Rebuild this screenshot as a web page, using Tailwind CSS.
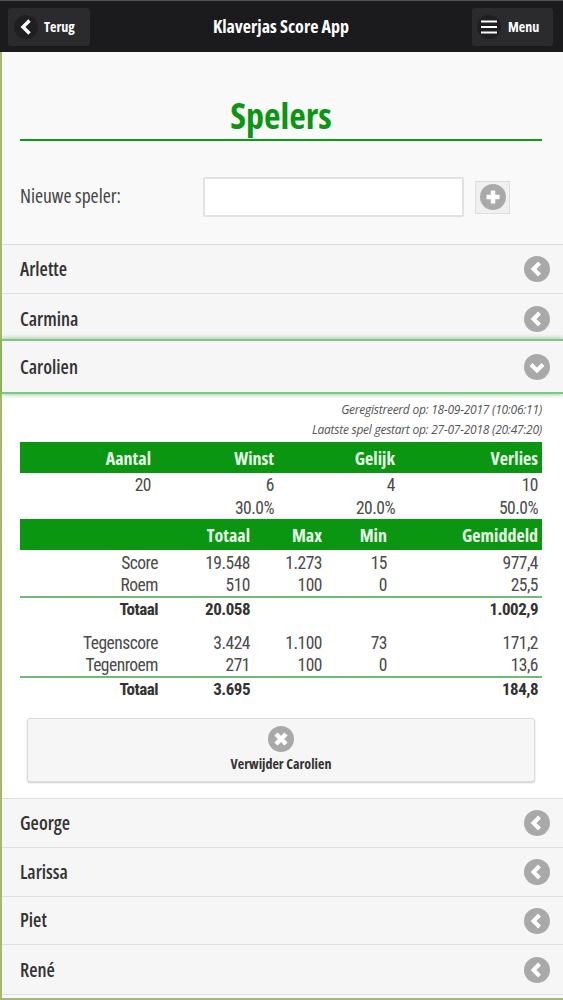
<!DOCTYPE html>
<html lang="nl">
<head>
    <meta charset="UTF-8">
    <meta name="viewport" content="width=device-width, initial-scale=1.0">
    <title>Klaverjas Score App</title>
    <script src="https://cdn.jsdelivr.net/npm/@tailwindcss/browser@4"></script>
</head>
<body class="bg-[#f9f9f9] font-['Open_Sans',sans-serif] [font-stretch:75%] text-[#333]">
    <div class="w-[563px] h-[1000px] overflow-hidden flex flex-col">
        <header class="h-[52px] shrink-0 bg-[#1b1b1d] border-t border-[#555] flex items-center justify-between pl-2 pr-[10px]">
            <a class="w-[82px] h-[38px] bg-[#2b2b2d] rounded-[3px] flex items-center pl-[6px] gap-[6px] text-white text-[14px] font-bold">
                <svg class="w-[24px] h-[24px]" viewBox="0 0 24 24"><circle cx="12" cy="12" r="12" fill="#1f1f21"/><path d="M15.500 5.500 L9 12 L15.500 18.500" fill="none" stroke="#fff" stroke-width="3.400"/></svg>
                <span>Terug</span>
            </a>
            <h1 class="text-white text-[18px] font-bold">Klaverjas Score App</h1>
            <a class="w-[81px] h-[38px] bg-[#2b2b2d] rounded-[3px] flex items-center pl-[5px] gap-[7px] text-white text-[14px] font-bold">
                <svg class="w-[24px] h-[24px]" viewBox="0 0 24 24"><circle cx="12" cy="12" r="12" fill="#1f1f21"/><path d="M4 6.500H20M4 12H20M4 17.500H20" fill="none" stroke="#fff" stroke-width="2.200"/></svg>
                <span>Menu</span>
            </a>
        </header>

        <main class="flex-1 border-l-2 border-b-2 border-[#a5b96c] flex flex-col">
            <div class="pl-[18px] pr-[21px] pt-[41px]">
                <h2 class="text-[36px] leading-[46px] font-bold text-[#0a9611] text-center border-b-2 border-[#0f9a17] h-[48px]">Spelers</h2>
                <div class="flex items-center mt-[35px] h-[42px]">
                    <label class="w-[183px] -mt-[2px] text-[19.500px] text-[#444]">Nieuwe speler:</label>
                    <input type="text" class="w-[261px] h-[40px] bg-white border-2 border-[#e2e2e2] rounded-[2px]">
                    <button class="ml-[11px] w-[35px] h-[33px] bg-[#f0f0f0] border border-[#dedede] flex items-center justify-center">
                        <svg class="w-[26px] h-[26px]" viewBox="0 0 26 26"><circle cx="13" cy="13" r="13" fill="#a9a9a9"/><path d="M13 6.500V19.500M6.500 13H19.500" stroke="#fff" stroke-width="4.500"/></svg>
                    </button>
                </div>
            </div>

            <div class="mt-[26px] border-t border-[#dfdfdf]">
                <div class="h-[49px] bg-[#f6f6f6] border-b border-[#dfdfdf] flex items-center justify-between pl-[18px] pr-[13px] text-[19px] font-semibold">
                    <span>Arlette</span>
                    <svg class="w-[26px] h-[26px]" viewBox="0 0 26 26"><circle cx="13" cy="13" r="13" fill="#a9a9a9"/><path d="M15.500 7 L9.500 13 L15.500 19" fill="none" stroke="#fff" stroke-width="4"/></svg>
                </div>
                <div class="h-[45px] pt-[5px] bg-[#f6f6f6] flex items-center justify-between pl-[18px] pr-[13px] text-[19px] font-semibold">
                    <span>Carmina</span>
                    <svg class="w-[26px] h-[26px]" viewBox="0 0 26 26"><circle cx="13" cy="13" r="13" fill="#a9a9a9"/><path d="M15.500 7 L9.500 13 L15.500 19" fill="none" stroke="#fff" stroke-width="4"/></svg>
                </div>
                <div class="relative h-[55px] pt-px bg-[#f6f6f6] border-y-2 border-[#82c486] shadow-[0_0_5px_rgba(30,150,40,0.6)] flex items-center justify-between pl-[18px] pr-[13px] text-[19px] font-semibold">
                    <span>Carolien</span>
                    <svg class="w-[26px] h-[26px]" viewBox="0 0 26 26"><circle cx="13" cy="13" r="13" fill="#a9a9a9"/><path d="M7 10.500 L13 16.500 L19 10.500" fill="none" stroke="#fff" stroke-width="4"/></svg>
                </div>

                <section class="bg-white h-[404px] pl-[18px] pr-[21px] pt-[6px]">
                    <p class="text-[12px] [font-stretch:100%] tracking-[-0.25px] leading-[20px] italic text-[#555] text-right">Geregistreerd op: 18-09-2017 (10:06:11)</p>
                    <p class="text-[12px] [font-stretch:100%] tracking-[-0.25px] leading-[20px] italic text-[#555] text-right">Laatste spel gestart op: 27-07-2018 (20:47:20)</p>

                    <table class="w-[522px] table-fixed mt-[2px] text-[17.500px] leading-[22px] text-right text-[#4a4a4a]">
                        <colgroup><col class="w-[135px]"><col class="w-[123px]"><col class="w-[121px]"><col class="w-[143px]"></colgroup>
                        <thead class="bg-[#0a9611] text-[#e9fbe9] font-bold text-[18px]">
                            <tr class="h-[31px]"><th class="pr-1">Aantal</th><th class="pr-1">Winst</th><th class="pr-1">Gelijk</th><th class="pr-1">Verlies</th></tr>
                        </thead>
                        <tbody class="font-['Roboto',sans-serif] tracking-[-0.5px]">
                            <tr class="h-[23px]"><td class="pr-1">20</td><td class="pr-1">6</td><td class="pr-1">4</td><td class="pr-1">10</td></tr>
                            <tr class="h-[23px]"><td class="pr-1"></td><td class="pr-1">30.0%</td><td class="pr-1">20.0%</td><td class="pr-1">50.0%</td></tr>
                        </tbody>
                    </table>

                    <table class="w-[522px] table-fixed text-[17.500px] leading-[22px] text-right text-[#4a4a4a]">
                        <colgroup><col class="w-[142px]"><col class="w-[92px]"><col class="w-[72px]"><col class="w-[65px]"><col class="w-[151px]"></colgroup>
                        <thead class="bg-[#0a9611] text-[#e9fbe9] font-bold text-[18px]">
                            <tr class="h-[31px]"><th class="pr-1"></th><th class="pr-1">Totaal</th><th class="pr-1">Max</th><th class="pr-1">Min</th><th class="pr-1">Gemiddeld</th></tr>
                        </thead>
                        <tbody class="font-['Roboto',sans-serif] tracking-[-0.5px]">
                            <tr class="h-[24px] align-bottom"><td class="pr-1">Score</td><td class="pr-1">19.548</td><td class="pr-1">1.273</td><td class="pr-1">15</td><td class="pr-1">977,4</td></tr>
                            <tr class="h-[22px] border-b-2 border-[#74b878]"><td class="pr-1">Roem</td><td class="pr-1">510</td><td class="pr-1">100</td><td class="pr-1">0</td><td class="pr-1">25,5</td></tr>
                            <tr class="h-[23px] text-[17px] font-bold text-[#333]"><td class="pr-1">Totaal</td><td class="pr-1">20.058</td><td></td><td></td><td class="pr-1">1.002,9</td></tr>
                            <tr class="h-[11px]"><td colspan="5"></td></tr>
                            <tr class="h-[23px]"><td class="pr-1">Tegenscore</td><td class="pr-1">3.424</td><td class="pr-1">1.100</td><td class="pr-1">73</td><td class="pr-1">171,2</td></tr>
                            <tr class="h-[22px] border-b-2 border-[#74b878]"><td class="pr-1">Tegenroem</td><td class="pr-1">271</td><td class="pr-1">100</td><td class="pr-1">0</td><td class="pr-1">13,6</td></tr>
                            <tr class="h-[23px] text-[17px] font-bold text-[#333]"><td class="pr-1">Totaal</td><td class="pr-1">3.695</td><td></td><td></td><td class="pr-1">184,8</td></tr>
                        </tbody>
                    </table>

                    <button class="mt-[18px] ml-[7px] w-[508px] h-[64px] bg-[#f6f6f6] border border-[#dcdcdc] rounded-[3px] shadow-[0_1px_2px_rgba(0,0,0,0.2)] flex flex-col items-center justify-center text-[14px] font-bold">
                        <svg class="w-[26px] h-[26px]" viewBox="0 0 26 26"><circle cx="13" cy="13" r="13" fill="#a9a9a9"/><path d="M8 8 L18 18 M18 8 L8 18" stroke="#fff" stroke-width="4.500"/></svg>
                        <span class="mt-[1px]">Verwijder Carolien</span>
                    </button>
                </section>

                <div class="h-[50px] bg-[#f6f6f6] border-y border-[#dfdfdf] flex items-center justify-between pl-[18px] pr-[13px] text-[19px] font-semibold">
                    <span>George</span>
                    <svg class="w-[26px] h-[26px]" viewBox="0 0 26 26"><circle cx="13" cy="13" r="13" fill="#a9a9a9"/><path d="M15.500 7 L9.500 13 L15.500 19" fill="none" stroke="#fff" stroke-width="4"/></svg>
                </div>
                <div class="h-[49px] bg-[#f6f6f6] border-b border-[#dfdfdf] flex items-center justify-between pl-[18px] pr-[13px] text-[19px] font-semibold">
                    <span>Larissa</span>
                    <svg class="w-[26px] h-[26px]" viewBox="0 0 26 26"><circle cx="13" cy="13" r="13" fill="#a9a9a9"/><path d="M15.500 7 L9.500 13 L15.500 19" fill="none" stroke="#fff" stroke-width="4"/></svg>
                </div>
                <div class="h-[48px] bg-[#f6f6f6] border-b border-[#dfdfdf] flex items-center justify-between pl-[18px] pr-[13px] text-[19px] font-semibold">
                    <span>Piet</span>
                    <svg class="w-[26px] h-[26px]" viewBox="0 0 26 26"><circle cx="13" cy="13" r="13" fill="#a9a9a9"/><path d="M15.500 7 L9.500 13 L15.500 19" fill="none" stroke="#fff" stroke-width="4"/></svg>
                </div>
                <div class="h-[50px] pt-px bg-[#f6f6f6] border-b border-[#dfdfdf] flex items-center justify-between pl-[18px] pr-[13px] text-[19px] font-semibold">
                    <span>René</span>
                    <svg class="w-[26px] h-[26px]" viewBox="0 0 26 26"><circle cx="13" cy="13" r="13" fill="#a9a9a9"/><path d="M15.500 7 L9.500 13 L15.500 19" fill="none" stroke="#fff" stroke-width="4"/></svg>
                </div>
            </div>
        </main>
    </div>
</body>
</html>
